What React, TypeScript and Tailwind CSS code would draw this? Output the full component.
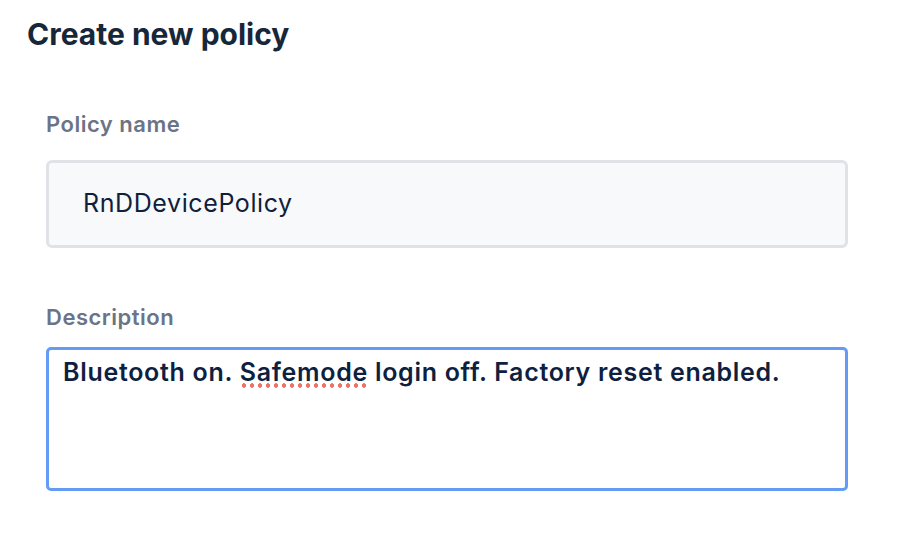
const font = { fontFamily: "Inter, 'Noto Sans', sans-serif" };

const CreatePolicyPage = () => {
    return (
        <div className="min-h-[540px] bg-white px-[27px] pt-[16px]" style={font}>
            <h1 className="text-[30px] leading-[36px] font-bold text-[#17273a]">
                Create new policy
            </h1>

            <div className="ml-[19px] w-[802px]">
                <label className="mt-[58px] block text-[22px] leading-[28px] font-semibold tracking-[0.5px] text-[#6b7487]">
                    Policy name
                </label>
                <div className="mt-[22px] flex h-[88px] items-center rounded-[6px] border-[3px] border-[#e1e2e7] bg-[#f8f9fb] px-[34px]">
                    <span className="text-[25px] tracking-[0.6px] text-[#10203c]">RnDDevicePolicy</span>
                </div>

                <label className="mt-[55px] block text-[22px] leading-[28px] font-semibold tracking-[0.5px] text-[#6b7487]">
                    Description
                </label>
                <div className="mt-[16px] h-[144px] rounded-[5px] border-[3px] border-[#629cf6] px-[14px] pt-[6px]">
                    <p className="text-[25px] leading-[32px] font-semibold tracking-[0.7px] text-[#0f1f3f]">
                        Bluetooth on.{" "}
                        <span className="bg-[radial-gradient(circle,#ec7468_2px,transparent_2.5px)] bg-[length:8px_5px] bg-[position:0_100%] bg-repeat-x pb-[1px]">
                            Safemode
                        </span>{" "}
                        login off. Factory reset enabled.
                    </p>
                </div>
            </div>
        </div>
    );
};

export default CreatePolicyPage;
